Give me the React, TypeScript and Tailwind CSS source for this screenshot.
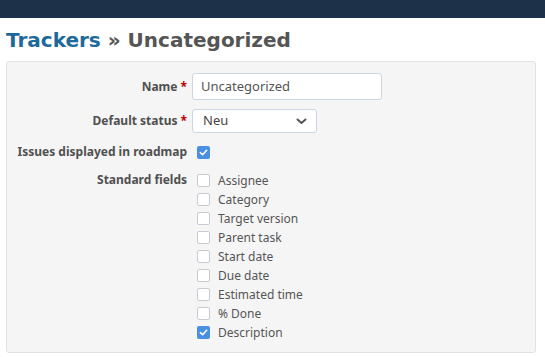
import React from "react";

const fields = [
  { label: "Assignee", checked: false },
  { label: "Category", checked: false },
  { label: "Target version", checked: false },
  { label: "Parent task", checked: false },
  { label: "Start date", checked: false },
  { label: "Due date", checked: false },
  { label: "Estimated time", checked: false },
  { label: "% Done", checked: false },
  { label: "Description", checked: true },
];

const Box = ({ checked }: { checked: boolean }) =>
  checked ? (
    <span className="flex h-[13px] w-[13px] items-center justify-center rounded-[2px] bg-[#4a90e2]">
      <svg width="9" height="9" viewBox="0 0 10 10">
        <path d="M1.5 5.2 L4 7.5 L8.5 2.5" fill="none" stroke="#fff" strokeWidth="1.8" strokeLinecap="round" strokeLinejoin="round" />
      </svg>
    </span>
  ) : (
    <span className="block h-[13px] w-[13px] rounded-[2px] border border-[#c8ccd2] bg-white" />
  );

const Label = ({ text, req }: { text: string; req?: boolean }) => (
  <div className="w-[185px] shrink-0 pr-[5px] text-right font-bold text-[#505050]">
    {text}
    {req && <span className="ml-[3px] text-[#bb0000]">*</span>}
  </div>
);

export default function App() {
  return (
    <div className="min-h-[357px] bg-white font-['Noto_Sans',sans-serif] text-[12px]">
      <div className="h-[18px] bg-[#1d3149]" />
      <h2 className="px-[6px] pt-[8px] pb-[7px] font-['DejaVu_Sans',sans-serif] text-[20px] font-bold leading-[28px] text-[#555]">
        <a className="text-[#1d6a9a]">Trackers</a> » Uncategorized
      </h2>
      <div className="mx-[6px] w-[530px] rounded-[3px] border border-[#e2e2e2] bg-[#f5f5f5] pt-[11px] pb-[10px]">
        <div className="flex items-center">
          <Label text="Name" req />
          <div className="flex h-[27px] w-[190px] items-center rounded-[3px] border border-[#ccd5e4] bg-white px-[8px] text-[13px] text-[#555]">
            Uncategorized
          </div>
        </div>
        <div className="mt-[9px] flex items-center">
          <Label text="Default status" req />
          <div className="flex h-[24px] w-[125px] items-center justify-between rounded-[3px] border border-[#ccd5e4] bg-white pl-[10px] pr-[9px] text-[13px] text-[#444]">
            <span>Neu</span>
            <svg width="11" height="7" viewBox="0 0 11 7">
              <path d="M1.5 1.5 L5.5 5 L9.5 1.5" fill="none" stroke="#555" strokeWidth="2" strokeLinecap="round" strokeLinejoin="round" />
            </svg>
          </div>
        </div>
        <div className="mt-[10px] flex items-center">
          <Label text="Issues displayed in roadmap" />
          <div className="pl-[5px]">
            <Box checked />
          </div>
        </div>
        <div className="mt-[10px] flex items-start">
          <Label text="Standard fields" />
          <div className="flex flex-col pl-[5px]">
            {fields.map((f) => (
              <div key={f.label} className="flex h-[19px] items-center gap-[8px] text-[#555]">
                <Box checked={f.checked} />
                <span>{f.label}</span>
              </div>
            ))}
          </div>
        </div>
      </div>
    </div>
  );
}
